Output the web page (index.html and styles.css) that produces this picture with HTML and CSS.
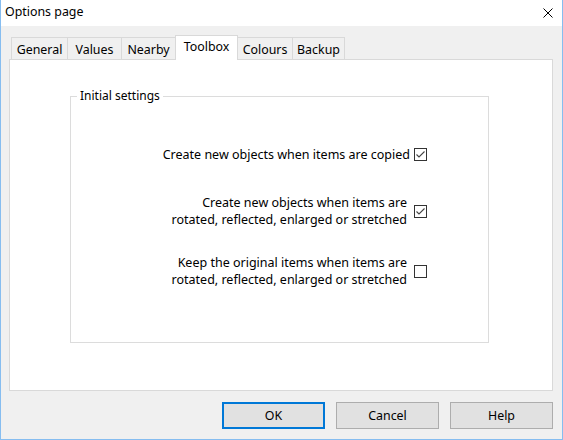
FILE: index.html
```html
<!DOCTYPE html>
<html>
<head>
<meta charset="utf-8">
<link rel="stylesheet" href="styles.css">
</head>
<body>
<div class="window">
  <div class="titlebar">
    <span class="title">Options page</span>
    <svg class="close" width="10" height="10" viewBox="0 0 10 10"><path d="M0.5 0.5 L9.5 9.5 M9.5 0.5 L0.5 9.5" stroke="#000" stroke-width="1" fill="none"/></svg>
  </div>
  <div class="client">
    <div class="tabs">
      <div class="tab w-general">General</div>
      <div class="tab w-values">Values</div>
      <div class="tab w-nearby">Nearby</div>
      <div class="tab selected w-toolbox">Toolbox</div>
      <div class="tab w-colours">Colours</div>
      <div class="tab w-backup">Backup</div>
    </div>
    <div class="panel">
      <div class="group">
        <span class="legend">Initial settings</span>
        <div class="row row-single">
          <span class="label">Create new objects when items are copied</span>
          <span class="check checked narrow"><svg width="11" height="11" viewBox="0 0 11 11"><path d="M1.5 5.5 L4 8 L9.5 2.5" stroke="#444" stroke-width="1.1" fill="none"/></svg></span>
        </div>
        <div class="row row-double">
          <span class="label">Create new objects when items are<br>rotated, reflected, enlarged or stretched</span>
          <span class="check checked"><svg width="11" height="11" viewBox="0 0 11 11"><path d="M1.5 5.5 L4 8 L9.5 2.5" stroke="#444" stroke-width="1.1" fill="none"/></svg></span>
        </div>
        <div class="row row-double">
          <span class="label">Keep the original items when items are<br>rotated, reflected, enlarged or stretched</span>
          <span class="check"></span>
        </div>
      </div>
    </div>
    <div class="buttons">
      <div class="btn default">OK</div>
      <div class="btn">Cancel</div>
      <div class="btn">Help</div>
    </div>
  </div>
</div>
</body>
</html>
```
FILE: styles.css
```css
html, body {
  margin: 0;
  padding: 0;
}
body {
  font-family: "Noto Sans", "Open Sans", sans-serif;
  font-size: 12.4px;
  color: #000;
}
.window {
  width: 563px;
  height: 440px;
  box-sizing: border-box;
  border: 1px solid #86bdf0;
  border-top: none;
  background: #f0f0f0;
  display: flex;
  flex-direction: column;
}
.titlebar {
  height: 26px;
  flex: none;
  background: #fff;
  display: flex;
  align-items: center;
  justify-content: space-between;
  padding: 0 9px 0 4px;
}
.title {
  line-height: 16px;
  margin-top: -2px;
}
.close {
  display: block;
}
.client {
  padding: 9px 9px 0 8px;
  display: flex;
  flex-direction: column;
}
.tabs {
  display: flex;
  align-items: flex-end;
  margin-left: 2px;
  height: 24px;
  position: relative;
  z-index: 1;
}
.tab {
  box-sizing: border-box;
  height: 22px;
  border: 1px solid #d9d9d9;
  border-bottom: none;
  margin-right: -1px;
  display: flex;
  align-items: center;
  justify-content: center;
  background: #f0f0f0;
  padding-top: 1px;
}
.tab.selected {
  height: 25px;
  margin-bottom: -1px;
  background: #fff;
  padding-top: 0;
  padding-bottom: 4px;
  z-index: 2;
}
.w-general { width: 57px; }
.w-values { width: 55px; }
.w-nearby { width: 55px; }
.w-toolbox { width: 63px; }
.w-colours { width: 56px; }
.w-backup { width: 53px; }
.panel {
  box-sizing: border-box;
  width: 544px;
  height: 332px;
  border: 1px solid #d9d9d9;
  background: #fff;
  padding: 36px 0 0 60px;
}
.group {
  position: relative;
  box-sizing: border-box;
  width: 419px;
  height: 247px;
  border: 1px solid #dcdcdc;
  padding: 43px 61px 0 0;
  display: flex;
  flex-direction: column;
  align-items: stretch;
}
.legend {
  position: absolute;
  left: 6px;
  top: -10px;
  padding: 0 3px 0 3px;
  background: #fff;
  line-height: 18px;
  font-size: 12px;
}
.row {
  display: flex;
  align-items: center;
  justify-content: flex-end;
  gap: 7px;
}
.row-single {
  height: 28px;
  gap: 4px;
}
.row-double {
  height: 34px;
  margin-top: 26px;
}
.label {
  text-align: right;
  line-height: 17px;
  font-size: 12.5px;
}
.check {
  flex: none;
  box-sizing: border-box;
  width: 13px;
  height: 13px;
  border: 1px solid #333;
  background: #fff;
  display: flex;
  align-items: center;
  justify-content: center;
}
.check svg { display: block; }
.buttons {
  display: flex;
  justify-content: flex-end;
  gap: 11px;
  margin-top: 11px;
}
.btn {
  box-sizing: border-box;
  width: 103px;
  height: 27px;
  border: 1px solid #adadad;
  background: #e1e1e1;
  display: flex;
  align-items: center;
  justify-content: center;
}
.btn.default {
  border: 2px solid #0078d7;
}
```
